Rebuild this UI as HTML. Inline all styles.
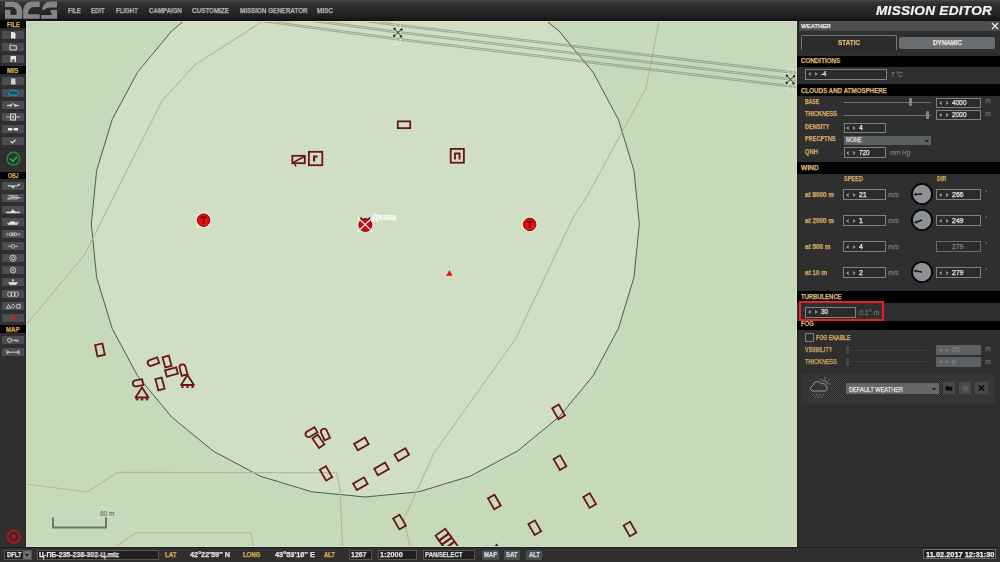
<!DOCTYPE html>
<html><head><meta charset="utf-8">
<style>
*{margin:0;padding:0;box-sizing:border-box}
html,body{width:1000px;height:562px;overflow:hidden;background:#2d2d2d;font-family:"Liberation Sans",sans-serif}
.a{position:absolute}
.t{white-space:nowrap;will-change:transform;-webkit-text-stroke:0.25px currentColor}
#top{left:0;top:0;width:1000px;height:21px;background:linear-gradient(#575757 0,#3e3e3e 2px,#333 6px,#2d2d2d 12px,#222 17px,#131313 21px)}
#top:after{content:"";position:absolute;left:0;top:0;right:0;bottom:0;background-image:linear-gradient(45deg,rgba(0,0,0,.25) 25%,transparent 25%,transparent 75%,rgba(0,0,0,.25) 75%),linear-gradient(45deg,rgba(0,0,0,.25) 25%,transparent 25%,transparent 75%,rgba(0,0,0,.25) 75%);background-size:2px 2px;background-position:0 0,1px 1px}
.menu{top:7px;font-size:7px;font-weight:bold;color:#a8a8a8;letter-spacing:-0.45px;line-height:7px;z-index:2}
#me{left:876px;top:3.5px;font-size:13.6px;font-weight:bold;font-style:italic;color:#f4f4f4;line-height:14px;z-index:2;letter-spacing:0.27px;will-change:transform;-webkit-text-stroke:0.2px #f4f4f4}
#side{left:0;top:21px;width:26px;height:526px;background:#333}
.sh{left:0;width:24px;height:8px;background:#000;color:#e0b050;font-size:7px;font-weight:bold;text-align:center;line-height:8px;letter-spacing:-0.3px}
.sb{left:2px;width:22px;height:8px;background:#4f4f4f;border-radius:1px}
#map{left:26px;top:21px;width:771px;height:526px;background:#c6d9ba;overflow:hidden}
#panel{left:797px;top:21px;width:203px;height:526px;background:#2e2e2e}
#bot{left:0;top:547px;width:1000px;height:15px;background:#2a2a2a}
.hd{left:0;width:203px;background:#000;color:#e8b050;font-size:7px;font-weight:bold;letter-spacing:-0.5px;padding-left:4px}
.lb{color:#d0a258;font-size:7px;letter-spacing:-0.4px;line-height:7px}
.bx{border:1px solid #7a7a7a;background:#2c2c2c;color:#e8e8e8;font-size:7.5px;line-height:9px;padding-left:3px}
.it{color:#8a8a8a;font-style:italic;font-size:7px;line-height:7px}
</style></head><body>
<div id="top" class="a"></div>
<div class="a t" style="left:68px;top:7.77px;font-size:6.5px;line-height:6.5px;font-weight:bold;color:#b0b0b0;font-style:normal;letter-spacing:0px;transform:scaleX(0.905);transform-origin:0 0;z-index:3;">FILE</div>
<div class="a t" style="left:91.25px;top:7.77px;font-size:6.5px;line-height:6.5px;font-weight:bold;color:#b0b0b0;font-style:normal;letter-spacing:0px;transform:scaleX(0.929);transform-origin:0 0;z-index:3;">EDIT</div>
<div class="a t" style="left:115.75px;top:7.77px;font-size:6.5px;line-height:6.5px;font-weight:bold;color:#b0b0b0;font-style:normal;letter-spacing:0px;transform:scaleX(0.933);transform-origin:0 0;z-index:3;">FLIGHT</div>
<div class="a t" style="left:148.6px;top:7.77px;font-size:6.5px;line-height:6.5px;font-weight:bold;color:#b0b0b0;font-style:normal;letter-spacing:0px;transform:scaleX(0.937);transform-origin:0 0;z-index:3;">CAMPAIGN</div>
<div class="a t" style="left:192px;top:7.77px;font-size:6.5px;line-height:6.5px;font-weight:bold;color:#b0b0b0;font-style:normal;letter-spacing:0px;transform:scaleX(0.970);transform-origin:0 0;z-index:3;">CUSTOMIZE</div>
<div class="a t" style="left:239.5px;top:7.77px;font-size:6.5px;line-height:6.5px;font-weight:bold;color:#b0b0b0;font-style:normal;letter-spacing:0px;transform:scaleX(0.962);transform-origin:0 0;z-index:3;">MISSION GENERATOR</div>
<div class="a t" style="left:317px;top:7.77px;font-size:6.5px;line-height:6.5px;font-weight:bold;color:#b0b0b0;font-style:normal;letter-spacing:0px;transform:scaleX(0.985);transform-origin:0 0;z-index:3;">MISC</div>
<div id="me" class="a">MISSION EDITOR</div>

<div class="a" style="left:0px;top:21px;width:26px;height:526px;background:#2f2f2f;"></div>
<div class="a" style="left:25px;top:21px;width:1px;height:526px;background:#222622;"></div>
<div class="a" style="left:0px;top:21px;width:25.7px;height:7px;background:#000;"></div>
<div class="a t" style="left:6.5px;top:21.13px;font-size:7px;line-height:7px;font-weight:bold;color:#e2b055;font-style:normal;letter-spacing:0px;transform:scaleX(0.857);transform-origin:0 0;">FILE</div>
<div class="a" style="left:2px;top:31px;width:22px;height:8px;background:#4b4e51;border-radius:1px;"></div>
<svg class="a" style="left:2px;top:31px" width="22" height="8"><path d="M9,1 h3 l1.5,1.5 v5 h-4.5 Z" fill="#e6e6e6"/></svg>
<div class="a" style="left:2px;top:43px;width:22px;height:8px;background:#4b4e51;border-radius:1px;"></div>
<svg class="a" style="left:2px;top:43px" width="22" height="8"><path d="M8,2 h2 l0.8,0.8 h3.5 v4.2 h-6.3 Z" fill="none" stroke="#e6e6e6" stroke-width="0.9"/></svg>
<div class="a" style="left:2px;top:55px;width:22px;height:8px;background:#4b4e51;border-radius:1px;"></div>
<svg class="a" style="left:2px;top:55px" width="22" height="8"><path d="M8.5,1 h5.5 v6 h-5.5 Z M9.8,4.5 h3 v2.2 h-3 Z" fill="#e6e6e6" fill-rule="evenodd"/></svg>
<div class="a" style="left:0px;top:66px;width:25.7px;height:8px;background:#000;"></div>
<div class="a t" style="left:7.25px;top:66.63px;font-size:7px;line-height:7px;font-weight:bold;color:#e2b055;font-style:normal;letter-spacing:0px;transform:scaleX(0.924);transform-origin:0 0;">MIS</div>
<div class="a" style="left:2px;top:77px;width:22px;height:8px;background:#4b4e51;border-radius:1px;"></div>
<svg class="a" style="left:2px;top:77px" width="22" height="8"><path d="M9,1.5 h4.5 v6 h-4.5 Z" fill="#cfcfcf"/></svg>
<div class="a" style="left:2px;top:89px;width:22px;height:8px;background:#4a4e52;border-radius:1px;"></div>
<svg class="a" style="left:2px;top:89px" width="22" height="8"><path d="M7,6 a2.2,2.2 0 0 1 1.5,-3.2 a2.5,2.5 0 0 1 4.5,-0.5 a2,2 0 0 1 2.2,3.7 Z" fill="#0f4a66" stroke="#2a9cc4" stroke-width="1"/></svg>
<div class="a" style="left:2px;top:101px;width:22px;height:8px;background:#4b4e51;border-radius:1px;"></div>
<svg class="a" style="left:2px;top:101px" width="22" height="8"><path d="M5,4.5 h3 M14,4.5 h3 M8,5 l3,-2.5 l3,2.5" fill="none" stroke="#e6e6e6" stroke-width="0.9"/><circle cx="8.5" cy="4.5" r="1" fill="none" stroke="#e6e6e6" stroke-width="0.7"/><circle cx="13.5" cy="4.5" r="1" fill="none" stroke="#e6e6e6" stroke-width="0.7"/></svg>
<div class="a" style="left:2px;top:113px;width:22px;height:8px;background:#4b4e51;border-radius:1px;"></div>
<svg class="a" style="left:2px;top:113px" width="22" height="8"><path d="M4,4 h14" stroke="#e6e6e6" stroke-width="0.8"/><rect x="8.5" y="1" width="5" height="6" fill="#505050" stroke="#e6e6e6" stroke-width="0.9"/><path d="M10,2.7 l2,2.6 M12,2.7 l-2,2.6" stroke="#e6e6e6" stroke-width="0.8"/></svg>
<div class="a" style="left:2px;top:125px;width:22px;height:8px;background:#4b4e51;border-radius:1px;"></div>
<svg class="a" style="left:2px;top:125px" width="22" height="8"><path d="M6,3 h4 v2.5 h-4 Z M12,3 h4 v2.5 h-4 Z" fill="#e6e6e6"/><path d="M10,4.2 h2" stroke="#e6e6e6" stroke-width="0.7"/></svg>
<div class="a" style="left:2px;top:137px;width:22px;height:8px;background:#4b4e51;border-radius:1px;"></div>
<svg class="a" style="left:2px;top:137px" width="22" height="8"><path d="M8.5,4.2 l1.8,1.8 l3.3,-3.3" fill="none" stroke="#e6e6e6" stroke-width="1.1"/></svg>
<svg class="a" style="left:5px;top:150px" width="18" height="18"><circle cx="8.4" cy="8.7" r="6.4" fill="#263a2b" stroke="#2b8a40" stroke-width="1.4"/><path d="M5,8.4 l2.8,2.9 l4.6,-4.9" fill="none" stroke="#2fa848" stroke-width="1.5"/></svg>
<div class="a" style="left:0px;top:172px;width:25.7px;height:7px;background:#000;"></div>
<div class="a t" style="left:7.65px;top:172.13px;font-size:7px;line-height:7px;font-weight:bold;color:#e2b055;font-style:normal;letter-spacing:0px;transform:scaleX(0.743);transform-origin:0 0;">OBJ</div>
<div class="a" style="left:2px;top:182px;width:22px;height:8px;background:#4b4e51;border-radius:1px;"></div>
<svg class="a" style="left:2px;top:182px" width="22" height="8"><path d="M5,3.8 L7,4.6 H14.5 L17.5,3.2 L18,1.8 L16.5,2 L15,3.6 H7.5 Z M9,4.6 L11.5,6.3 H12.5 L11.5,4.6" fill="#e6e6e6" stroke="none"/><path d="M6,3.2 l1.5,0.7" stroke="#e6e6e6" stroke-width="0.6"/></svg>
<div class="a" style="left:2px;top:194px;width:22px;height:8px;background:#4b4e51;border-radius:1px;"></div>
<svg class="a" style="left:2px;top:194px" width="22" height="8"><path d="M6,1.8 H16 M11,1.8 V3.2 M5.5,5 H15 L16,3.5 H8 Z M15.5,4 H18 L18.5,3" fill="none" stroke="#e6e6e6" stroke-width="0.75"/></svg>
<div class="a" style="left:2px;top:206px;width:22px;height:8px;background:#4b4e51;border-radius:1px;"></div>
<svg class="a" style="left:2px;top:206px" width="22" height="8"><path d="M4,6 H18 L17,6.8 H5 Z M8.5,6 L10,4.5 H12 L13.5,6 M10.5,4.5 V2.8" fill="#e6e6e6" stroke="#e6e6e6" stroke-width="0.6"/></svg>
<div class="a" style="left:2px;top:218px;width:22px;height:8px;background:#4b4e51;border-radius:1px;"></div>
<svg class="a" style="left:2px;top:218px" width="22" height="8"><path d="M5.5,5.2 H16 L15,6.5 H6.5 Z M8,5.2 V3.8 H12.5 V5.2 M12.5,4.2 H17" fill="#e6e6e6" stroke="#e6e6e6" stroke-width="0.6"/></svg>
<div class="a" style="left:2px;top:230px;width:22px;height:8px;background:#4b4e51;border-radius:1px;"></div>
<svg class="a" style="left:2px;top:230px" width="22" height="8"><path d="M4,4.3 L5.2,3 L6.4,4.3 L5.2,5.6 Z M15.6,4.3 L16.8,3 L18,4.3 L16.8,5.6 Z" fill="none" stroke="#e6e6e6" stroke-width="0.6"/><circle cx="8.5" cy="4.3" r="1.5" fill="none" stroke="#e6e6e6" stroke-width="0.7"/><circle cx="11" cy="4.3" r="1.5" fill="none" stroke="#e6e6e6" stroke-width="0.7"/><circle cx="13.5" cy="4.3" r="1.5" fill="none" stroke="#e6e6e6" stroke-width="0.7"/></svg>
<div class="a" style="left:2px;top:242px;width:22px;height:8px;background:#4b4e51;border-radius:1px;"></div>
<svg class="a" style="left:2px;top:242px" width="22" height="8"><path d="M6,4.3 h3 M13,4.3 h3" stroke="#e6e6e6" stroke-width="0.7"/><circle cx="11" cy="4.3" r="1.8" fill="none" stroke="#e6e6e6" stroke-width="0.7"/></svg>
<div class="a" style="left:2px;top:254px;width:22px;height:8px;background:#4b4e51;border-radius:1px;"></div>
<svg class="a" style="left:2px;top:254px" width="22" height="8"><circle cx="11" cy="4.2" r="3.2" fill="none" stroke="#e6e6e6" stroke-width="0.7"/><circle cx="11" cy="4.2" r="1.5" fill="none" stroke="#e6e6e6" stroke-width="0.7"/></svg>
<div class="a" style="left:2px;top:266px;width:22px;height:8px;background:#4b4e51;border-radius:1px;"></div>
<svg class="a" style="left:2px;top:266px" width="22" height="8"><circle cx="11" cy="4.2" r="2.8" fill="none" stroke="#e6e6e6" stroke-width="0.7"/><path d="M9.6,2.8 l2.8,2.8 M12.4,2.8 l-2.8,2.8" stroke="#e6e6e6" stroke-width="0.7"/></svg>
<div class="a" style="left:2px;top:278px;width:22px;height:8px;background:#4b4e51;border-radius:1px;"></div>
<svg class="a" style="left:2px;top:278px" width="22" height="8"><path d="M6.5,4.6 h9 l-1.5,2 h-6 Z M11,4.6 v-2" fill="#e6e6e6" stroke="#e6e6e6" stroke-width="0.6"/><circle cx="11" cy="2.2" r="0.9" fill="#e6e6e6"/></svg>
<div class="a" style="left:2px;top:290px;width:22px;height:8px;background:#4b4e51;border-radius:1px;"></div>
<svg class="a" style="left:2px;top:290px" width="22" height="8"><ellipse cx="7.6" cy="4.2" rx="2" ry="2.4" fill="none" stroke="#e6e6e6" stroke-width="0.7"/><ellipse cx="11" cy="4.2" rx="2" ry="2.4" fill="none" stroke="#e6e6e6" stroke-width="0.7"/><ellipse cx="14.4" cy="4.2" rx="2" ry="2.4" fill="none" stroke="#e6e6e6" stroke-width="0.7"/></svg>
<div class="a" style="left:2px;top:302px;width:22px;height:8px;background:#4b4e51;border-radius:1px;"></div>
<svg class="a" style="left:2px;top:302px" width="22" height="8"><path d="M4.5,6.3 l2,-3.8 l2,3.8 Z M11,2.2 l2,2.1 l-2,2.1 l-2,-2.1 Z M14.8,2.4 h3.4 v3.8 h-3.4 Z" fill="none" stroke="#e6e6e6" stroke-width="0.75"/></svg>
<div class="a" style="left:2px;top:314px;width:22px;height:8px;background:#4b4e51;border-radius:1px;"></div>
<svg class="a" style="left:2px;top:314px" width="22" height="8"><path d="M9.2,2.2 l3.6,3.8 M12.8,2.2 l-3.6,3.8" stroke="#dd1a1a" stroke-width="1.5"/></svg>
<div class="a" style="left:0px;top:325px;width:25.7px;height:8px;background:#000;"></div>
<div class="a t" style="left:6.15px;top:325.63px;font-size:7px;line-height:7px;font-weight:bold;color:#e2b055;font-style:normal;letter-spacing:0px;transform:scaleX(0.881);transform-origin:0 0;">MAP</div>
<div class="a" style="left:2px;top:336px;width:22px;height:8px;background:#4b4e51;border-radius:1px;"></div>
<svg class="a" style="left:2px;top:336px" width="22" height="8"><circle cx="7.5" cy="4.2" r="2" fill="none" stroke="#e6e6e6" stroke-width="0.8"/><path d="M9.5,4.2 h7 M14,4.2 v1.8 M16,4.2 v1.5" stroke="#e6e6e6" stroke-width="0.8"/></svg>
<div class="a" style="left:2px;top:348px;width:22px;height:8px;background:#4b4e51;border-radius:1px;"></div>
<svg class="a" style="left:2px;top:348px" width="22" height="8"><path d="M5,2 v4.5 M17,2 v4.5 M5.5,4.2 h11 M7,3 l-1.2,1.2 l1.2,1.2 M15,3 l1.2,1.2 l-1.2,1.2" stroke="#e6e6e6" stroke-width="0.8" fill="none"/></svg>
<svg class="a" style="left:4px;top:527px" width="20" height="20"><circle cx="9.75" cy="9.8" r="6.2" fill="none" stroke="#a8161e" stroke-width="2.3"/><circle cx="9.75" cy="9.6" r="2.4" fill="#b0161e"/></svg>
<svg class="a" style="left:0;top:0" width="60" height="21"><g fill="#858585"><path d="M5,1.7 H12.5 C18.5,1.7 22.2,6 22.2,12 V18.7 H5 V9.7 H10.4 V14.8 H16.6 V12 C16.6,9 14.5,6.9 12,6.9 H5 Z"/><path d="M23.2,18.7 V11 C23.2,5.5 27,1.5 32.2,1.5 H39.7 V6.9 H34 C30.5,6.9 28.1,10 28.1,14.2 H39.7 V18.7 Z"/><path d="M41.9,9.7 C43,4.5 46.5,1.5 51,1.5 H57 V7.5 H51 C47.5,7.5 45.5,8.3 44.8,9.7 Z"/><path d="M50,10 H57 V18.7 H41.2 V14.9 H52 Z"/></g></svg>
<div id="map" class="a"><svg class="a" style="left:0;top:0" width="771" height="526" viewBox="26 21 771 526"><polygon points="639.3,224.0 634.0,277.3 618.4,328.5 593.1,375.7 559.0,417.0 517.5,451.0 470.2,476.2 418.8,491.8 365.3,497.0 311.8,491.8 260.4,476.2 213.1,451.0 171.6,417.0 137.5,375.7 112.2,328.5 96.6,277.3 91.3,224.0 96.6,170.7 112.2,119.5 137.5,72.3 171.6,31.0 213.1,-3.0 260.4,-28.2 311.8,-43.8 365.3,-49.0 418.8,-43.8 470.2,-28.2 517.5,-3.0 559.0,31.0 593.1,72.3 618.4,119.5 634.0,170.7" fill="#d0dfc4" stroke="#4d5c4b" stroke-width="1"/><polyline points="263,21 194.8,64.9 162,101 84.5,255 26,325" fill="none" stroke="#b9b597" stroke-width="1.1"/><polyline points="659,21 646,88 585.5,199 574,215.5 516,338.2 434,453 404,519 410,547" fill="none" stroke="#b9b597" stroke-width="1.1"/><polyline points="26,484 87.4,492 117.5,472.4 336.5,472.7 340,489 342.5,547" fill="none" stroke="#b9b597" stroke-width="1.1"/><polyline points="115,547 136,532.8 251,532.8 253.6,547" fill="none" stroke="#b9b597" stroke-width="1.1"/><polyline points="200,-2.37 398,24.36 800,72.60" fill="none" stroke="#7c8d76" stroke-width="0.75" opacity="0.9"/><polyline points="200,-0.77 398,25.96 800,74.20" fill="none" stroke="#7c8d76" stroke-width="0.75" opacity="0.9"/><polyline points="200,4.63 398,31.36 800,79.60" fill="none" stroke="#7c8d76" stroke-width="0.75" opacity="0.9"/><polyline points="200,6.23 398,32.96 800,81.20" fill="none" stroke="#7c8d76" stroke-width="0.75" opacity="0.9"/><polyline points="200,11.63 398,38.36 800,86.60" fill="none" stroke="#7c8d76" stroke-width="0.75" opacity="0.9"/><polyline points="200,13.23 398,39.96 800,88.20" fill="none" stroke="#7c8d76" stroke-width="0.75" opacity="0.9"/><rect x="395.5" y="21.6" width="5" height="23" fill="none" stroke="#eef2e6" stroke-width="0.8" opacity="0.6"/><path d="M394.5,28.8 L401.5,36.4 M401.5,29.400000000000002 L394.5,35.800000000000004" stroke="#334433" stroke-width="1"/><circle cx="394.5" cy="28.8" r="1.2" fill="#253525"/><circle cx="401.5" cy="29.400000000000002" r="1.2" fill="#253525"/><circle cx="394.2" cy="35.800000000000004" r="1.2" fill="#253525"/><circle cx="401" cy="36.4" r="1.2" fill="#253525"/><rect x="788.0" y="68.5" width="5" height="23" fill="none" stroke="#eef2e6" stroke-width="0.8" opacity="0.6"/><path d="M787.0,75.7 L794.0,83.3 M794.0,76.3 L787.0,82.7" stroke="#334433" stroke-width="1"/><circle cx="787.0" cy="75.7" r="1.2" fill="#253525"/><circle cx="794.0" cy="76.3" r="1.2" fill="#253525"/><circle cx="786.7" cy="82.7" r="1.2" fill="#253525"/><circle cx="793.5" cy="83.3" r="1.2" fill="#253525"/><rect x="-6.2" y="-3.4" width="12.4" height="6.8" transform="translate(404,124.75) rotate(0)" fill="none" stroke="#6a1616" stroke-width="1.8"/><rect x="-6.7" y="-6.7" width="13.4" height="13.4" transform="translate(315.6,158.5) rotate(0)" fill="none" stroke="#6a1616" stroke-width="1.8"/><path d="M313,161.5 V155.5 H317.5 V157.5 H315.2 V161.5 Z" fill="#6a1616"/><rect x="-6.2" y="-3.7" width="12.5" height="7.4" transform="translate(298.5,159.5) rotate(0)" fill="none" stroke="#6a1616" stroke-width="1.8"/><path d="M292.5,163 L305,156 M294,163 L296,166.5" stroke="#6a1616" stroke-width="1.5" fill="none"/><rect x="-6.6" y="-6.9" width="13.2" height="13.8" transform="translate(457.3,155.8) rotate(0)" fill="none" stroke="#6a1616" stroke-width="1.8"/><path d="M454,159.5 V152.5 H460.5 V159.5 H458.6 V154.4 H455.9 V159.5 Z" fill="#6a1616"/><rect x="-3.8" y="-5.8" width="7.5" height="11.5" transform="translate(100,350) rotate(-12)" fill="none" stroke="#6a1616" stroke-width="1.8"/><path d="M-2.5,-3.0 H5.5 V3.0 H-2.5 A3.0,3.0 0 0 1 -2.5,-3.0 Z" transform="translate(153,362) rotate(-20)" fill="none" stroke="#6a1616" stroke-width="1.8"/><rect x="-3.2" y="-5.2" width="6.5" height="10.5" transform="translate(167,361.5) rotate(-15)" fill="none" stroke="#6a1616" stroke-width="1.8"/><rect x="-5.8" y="-3.2" width="11.5" height="6.5" transform="translate(171.5,372) rotate(-15)" fill="none" stroke="#6a1616" stroke-width="1.8"/><path d="M-2.5,-3.0 H5.5 V3.0 H-2.5 A3.0,3.0 0 0 1 -2.5,-3.0 Z" transform="translate(183.2,369.8) rotate(75)" fill="none" stroke="#6a1616" stroke-width="1.8"/><path d="M187.4,375 L194,385 L181,385 Z" fill="none" stroke="#6a1616" stroke-width="1.8" stroke-linejoin="round"/><path d="M182.5,385 v2.8 M187.5,385 v2.8 M192.5,385 v2.8" stroke="#6a1616" stroke-width="1.5"/><path d="M181,387.3 h2.8 M186.1,387.3 h2.8 M191.2,387.3 h2.8" stroke="#6a1616" stroke-width="1.1"/><path d="M-2.0,-3.0 H5.0 V3.0 H-2.0 A3.0,3.0 0 0 1 -2.0,-3.0 Z" transform="translate(137.8,383) rotate(-10)" fill="none" stroke="#6a1616" stroke-width="1.8"/><path d="M142,387.5 L148.5,397.5 L135.5,397.5 Z" fill="none" stroke="#6a1616" stroke-width="1.8" stroke-linejoin="round"/><path d="M137.0,397.5 v2.8 M142.0,397.5 v2.8 M147.0,397.5 v2.8" stroke="#6a1616" stroke-width="1.5"/><path d="M135.5,399.8 h2.8 M140.6,399.8 h2.8 M145.7,399.8 h2.8" stroke="#6a1616" stroke-width="1.1"/><rect x="-3.2" y="-5.8" width="6.5" height="11.5" transform="translate(160,384) rotate(-15)" fill="none" stroke="#6a1616" stroke-width="1.8"/><path d="M-2.8,-3.0 H5.8 V3.0 H-2.8 A3.0,3.0 0 0 1 -2.8,-3.0 Z" transform="translate(311,432.7) rotate(-30)" fill="none" stroke="#6a1616" stroke-width="1.8"/><rect x="-3.2" y="-5.8" width="6.5" height="11.5" transform="translate(318.4,441.4) rotate(-35)" fill="none" stroke="#6a1616" stroke-width="1.8"/><path d="M-2.5,-3.0 H5.5 V3.0 H-2.5 A3.0,3.0 0 0 1 -2.5,-3.0 Z" transform="translate(325,434) rotate(65)" fill="none" stroke="#6a1616" stroke-width="1.8"/><rect x="-6.2" y="-3.8" width="12.5" height="7.5" transform="translate(361.4,444) rotate(-30)" fill="none" stroke="#6a1616" stroke-width="1.8"/><rect x="-6.2" y="-3.8" width="12.5" height="7.5" transform="translate(401.8,454.7) rotate(-30)" fill="none" stroke="#6a1616" stroke-width="1.8"/><rect x="-6.2" y="-3.8" width="12.5" height="7.5" transform="translate(381.5,469) rotate(-30)" fill="none" stroke="#6a1616" stroke-width="1.8"/><rect x="-6.2" y="-3.8" width="12.5" height="7.5" transform="translate(360.4,483.8) rotate(-30)" fill="none" stroke="#6a1616" stroke-width="1.8"/><rect x="-3.5" y="-6.2" width="7" height="12.5" transform="translate(326,473.4) rotate(-30)" fill="none" stroke="#6a1616" stroke-width="1.8"/><rect x="-3.8" y="-6.2" width="7.5" height="12.5" transform="translate(558.6,411.8) rotate(-30)" fill="none" stroke="#6a1616" stroke-width="1.8"/><rect x="-3.8" y="-6.2" width="7.5" height="12.5" transform="translate(560,462.6) rotate(-30)" fill="none" stroke="#6a1616" stroke-width="1.8"/><rect x="-3.8" y="-6.2" width="7.5" height="12.5" transform="translate(494.4,501.9) rotate(-30)" fill="none" stroke="#6a1616" stroke-width="1.8"/><rect x="-3.8" y="-6.2" width="7.5" height="12.5" transform="translate(589.7,500.5) rotate(-30)" fill="none" stroke="#6a1616" stroke-width="1.8"/><rect x="-3.8" y="-6.2" width="7.5" height="12.5" transform="translate(534.8,527.6) rotate(-30)" fill="none" stroke="#6a1616" stroke-width="1.8"/><rect x="-3.8" y="-6.2" width="7.5" height="12.5" transform="translate(630,529) rotate(-30)" fill="none" stroke="#6a1616" stroke-width="1.8"/><rect x="-3.8" y="-6.2" width="7.5" height="12.5" transform="translate(399.5,522) rotate(-30)" fill="none" stroke="#6a1616" stroke-width="1.8"/><g transform="translate(446.2,540.3) rotate(54.4)"><rect x="-10" y="-6" width="22" height="12" fill="none" stroke="#6a1616" stroke-width="1.8"/><path d="M-4,-6 V6 M1,-6 V6 M6,-6 V6" stroke="#6a1616" stroke-width="2.2"/></g><path d="M494,547 L496.6,543.5 L499,547 Z" fill="#222"/><circle cx="203.6" cy="220.2" r="8.5" fill="#fff3e0" opacity="0.25"/><circle cx="203.6" cy="220.2" r="6.2" fill="#ec0f17" stroke="#7a0508" stroke-width="1"/><path d="M200.6,217.39999999999998 H206.6 M203.6,217.39999999999998 V223.5" stroke="#6a0000" stroke-width="1.6"/><circle cx="529.7" cy="224.4" r="8.5" fill="#fff3e0" opacity="0.25"/><circle cx="529.7" cy="224.4" r="6.2" fill="#ec0f17" stroke="#7a0508" stroke-width="1"/><path d="M526.7,221.6 H532.7 M529.7,221.6 V227.70000000000002" stroke="#6a0000" stroke-width="1.6"/><circle cx="365.4" cy="225" r="6.4" fill="#c90d16" stroke="#5e0006" stroke-width="0.9"/><path d="M360,220.5 L360.8,216.8 L363,219.2 Z M370.8,220.5 L370,216.8 L367.8,219.2 Z" fill="#140404"/><path d="M357,216.8 L373.3,232.4 M373.3,216.8 L357,232.4" stroke="#ffe8e8" stroke-width="1.3" opacity="0.95"/><text x="372" y="220.2" font-family="Liberation Sans" font-size="8.2" fill="#ffffff" stroke="#ffffff" stroke-width="0.25">Джава</text><path d="M449.4,270.2 L452.6,275.8 L446.2,275.8 Z" fill="#e01010"/><path d="M53,517.5 V527.5 H106 V517.5" fill="none" stroke="#6c7b68" stroke-width="2"/><text x="100" y="516" font-family="Liberation Sans" font-size="6.5" fill="#505a50">60 m</text><path d="M26,21.5 H797 M26.5,21 V547 M796.5,21 V547 M26,546.5 H797" stroke="#d2dec8" stroke-width="1"/></svg></div>
<div id="panel" class="a"></div>
<div class="a" style="left:797px;top:21px;width:203.00px;height:526.00px;background:#2f2f2f;"></div>
<div class="a" style="left:797px;top:21px;width:2.00px;height:526.00px;background:#262626;"></div>
<div class="a" style="left:799px;top:21px;width:201.00px;height:9.50px;background:#4a4d4f;"></div>
<div class="a t" style="left:801.3px;top:22.81px;font-size:6.2px;line-height:6.2px;font-weight:bold;color:#e6e6e6;font-style:normal;letter-spacing:0px;transform:scaleX(0.965);transform-origin:0 0;">WEATHER</div>
<svg class="a" style="left:991px;top:22px" width="8" height="8"><path d="M1,1 L7,7 M7,1 L1,7" stroke="#e8e8e8" stroke-width="1.3"/></svg>
<div class="a" style="left:801px;top:34.5px;width:96px;height:15.5px;border:1px solid #767676;border-bottom:none;background:#2b2b2b;border-radius:2px 2px 0 0"></div>
<div class="a t" style="left:838px;top:39.52px;font-size:6.4px;line-height:6.4px;font-weight:bold;color:#dfb977;font-style:normal;letter-spacing:0px;transform:scaleX(0.993);transform-origin:0 0;">STATIC</div>
<div class="a" style="left:899px;top:37px;width:96px;height:12px;background:#6a6d70;border-radius:2px"></div>
<div class="a t" style="left:932.8px;top:39.72px;font-size:6.4px;line-height:6.4px;font-weight:bold;color:#e4e4e4;font-style:normal;letter-spacing:0px;transform:scaleX(0.971);transform-origin:0 0;">DYNAMIC</div>
<div class="a" style="left:797px;top:56px;width:203.00px;height:10.50px;background:#000;"></div>
<div class="a t" style="left:801px;top:57.52px;font-size:6.8px;line-height:6.8px;font-weight:bold;color:#dfb977;font-style:normal;letter-spacing:0px;transform:scaleX(0.916);transform-origin:0 0;">CONDITIONS</div>
<div class="a" style="left:805px;top:69px;width:82.00px;height:10.60px;background:#2b2b2b;border:1px solid #808080;"></div>
<svg class="a" style="left:807.5px;top:72.3px" width="11" height="4"><path d="M2.6,0 L0.2,2 L2.6,4 Z M7.2,0 L9.6,2 L7.2,4 Z" fill="#a0a0a0"/></svg>
<div class="a t" style="left:820.8px;top:70.33px;font-size:7px;line-height:7px;font-weight:normal;color:#ececec;font-style:normal;letter-spacing:0px;transform:scaleX(0.868);transform-origin:0 0;">-4</div>
<div class="a t" style="left:890.6px;top:70.63px;font-size:7px;line-height:7px;font-weight:normal;color:#7e7e7e;font-style:italic;letter-spacing:0px;transform:scaleX(0.817);transform-origin:0 0;">T °C</div>
<div class="a" style="left:797px;top:84px;width:203.00px;height:12.00px;background:#000;"></div>
<div class="a t" style="left:801px;top:87.52px;font-size:6.8px;line-height:6.8px;font-weight:bold;color:#dfb977;font-style:normal;letter-spacing:0px;transform:scaleX(0.913);transform-origin:0 0;">CLOUDS AND ATMOSPHERE</div>
<div class="a t" style="left:805px;top:98.03px;font-size:7px;line-height:7px;font-weight:bold;color:#d3aa62;font-style:normal;letter-spacing:0px;transform:scaleX(0.740);transform-origin:0 0;">BASE</div>
<div class="a" style="left:843.5px;top:101.9px;width:87.00px;height:1.20px;background:#717171;"></div>
<div class="a" style="left:908.5px;top:98.4px;width:3.30px;height:8.00px;background:#858585;border-radius:1px;"></div>
<div class="a" style="left:936px;top:97.7px;width:45.00px;height:10.30px;background:#2b2b2b;border:1px solid #808080;"></div>
<svg class="a" style="left:938.5px;top:100.8px" width="11" height="4"><path d="M2.6,0 L0.2,2 L2.6,4 Z M7.2,0 L9.6,2 L7.2,4 Z" fill="#a0a0a0"/></svg>
<div class="a t" style="left:951.8px;top:98.88px;font-size:7px;line-height:7px;font-weight:normal;color:#ececec;font-style:normal;letter-spacing:0px;transform:scaleX(0.925);transform-origin:0 0;">4000</div>
<div class="a t" style="left:985px;top:97.43px;font-size:7px;line-height:7px;font-weight:normal;color:#6e6e6e;font-style:italic;letter-spacing:0px;">m</div>
<div class="a t" style="left:805px;top:110.33px;font-size:7px;line-height:7px;font-weight:bold;color:#d3aa62;font-style:normal;letter-spacing:0px;transform:scaleX(0.791);transform-origin:0 0;">THICKNESS</div>
<div class="a" style="left:843.5px;top:114.7px;width:87.00px;height:1.20px;background:#717171;"></div>
<div class="a" style="left:925.5px;top:111.2px;width:3.30px;height:8.00px;background:#858585;border-radius:1px;"></div>
<div class="a" style="left:936px;top:110px;width:45.00px;height:10.40px;background:#2b2b2b;border:1px solid #808080;"></div>
<svg class="a" style="left:938.5px;top:113.2px" width="11" height="4"><path d="M2.6,0 L0.2,2 L2.6,4 Z M7.2,0 L9.6,2 L7.2,4 Z" fill="#a0a0a0"/></svg>
<div class="a t" style="left:951.8px;top:111.23px;font-size:7px;line-height:7px;font-weight:normal;color:#ececec;font-style:normal;letter-spacing:0px;transform:scaleX(0.925);transform-origin:0 0;">2000</div>
<div class="a t" style="left:985px;top:109.83px;font-size:7px;line-height:7px;font-weight:normal;color:#6e6e6e;font-style:italic;letter-spacing:0px;">m</div>
<div class="a t" style="left:805px;top:123.13px;font-size:7px;line-height:7px;font-weight:bold;color:#d3aa62;font-style:normal;letter-spacing:0px;transform:scaleX(0.804);transform-origin:0 0;">DENSITY</div>
<div class="a" style="left:843.5px;top:122.5px;width:42.50px;height:10.70px;background:#2b2b2b;border:1px solid #808080;"></div>
<svg class="a" style="left:846.0px;top:125.8px" width="11" height="4"><path d="M2.6,0 L0.2,2 L2.6,4 Z M7.2,0 L9.6,2 L7.2,4 Z" fill="#a0a0a0"/></svg>
<div class="a t" style="left:859.3px;top:123.88px;font-size:7px;line-height:7px;font-weight:normal;color:#ececec;font-style:normal;letter-spacing:0px;">4</div>
<div class="a t" style="left:805px;top:135.13px;font-size:7px;line-height:7px;font-weight:bold;color:#d3aa62;font-style:normal;letter-spacing:0px;transform:scaleX(0.803);transform-origin:0 0;">PRECPTNS</div>
<div class="a" style="left:843.5px;top:136.4px;width:87.50px;height:8.80px;background:#5b6063;"></div>
<div class="a t" style="left:846px;top:137.42px;font-size:6.8px;line-height:6.8px;font-weight:normal;color:#e0e0e0;font-style:normal;letter-spacing:0px;transform:scaleX(0.814);transform-origin:0 0;">NONE</div>
<svg class="a" style="left:925px;top:139.6px" width="5" height="3"><path d="M0,0 H4 L2,2.5 Z" fill="#1a1a1a"/></svg>
<div class="a t" style="left:805px;top:148.13px;font-size:7px;line-height:7px;font-weight:bold;color:#d3aa62;font-style:normal;letter-spacing:0px;transform:scaleX(0.829);transform-origin:0 0;">QNH</div>
<div class="a" style="left:843.5px;top:147.3px;width:42.50px;height:10.70px;background:#2b2b2b;border:1px solid #808080;"></div>
<svg class="a" style="left:846.0px;top:150.7px" width="11" height="4"><path d="M2.6,0 L0.2,2 L2.6,4 Z M7.2,0 L9.6,2 L7.2,4 Z" fill="#a0a0a0"/></svg>
<div class="a t" style="left:859.3px;top:148.68px;font-size:7px;line-height:7px;font-weight:normal;color:#ececec;font-style:normal;letter-spacing:0px;transform:scaleX(0.899);transform-origin:0 0;">720</div>
<div class="a t" style="left:890.4px;top:149.03px;font-size:7px;line-height:7px;font-weight:normal;color:#7a7a7a;font-style:italic;letter-spacing:0px;transform:scaleX(0.887);transform-origin:0 0;">mm Hg</div>
<div class="a" style="left:797px;top:162px;width:203.00px;height:11.50px;background:#000;"></div>
<div class="a t" style="left:801px;top:165.32px;font-size:6.8px;line-height:6.8px;font-weight:bold;color:#dfb977;font-style:normal;letter-spacing:0px;transform:scaleX(0.976);transform-origin:0 0;">WIND</div>
<div class="a t" style="left:844px;top:175.13px;font-size:7px;line-height:7px;font-weight:bold;color:#d3aa62;font-style:normal;letter-spacing:0px;transform:scaleX(0.801);transform-origin:0 0;">SPEED</div>
<div class="a t" style="left:936.7px;top:175.13px;font-size:7px;line-height:7px;font-weight:bold;color:#d3aa62;font-style:normal;letter-spacing:0px;transform:scaleX(0.771);transform-origin:0 0;">DIR</div>
<div class="a t" style="left:805px;top:190.63px;font-size:7px;line-height:7px;font-weight:bold;color:#d3aa62;font-style:normal;letter-spacing:0px;transform:scaleX(0.909);transform-origin:0 0;">at 8000 m</div>
<div class="a" style="left:843.3px;top:189.2px;width:42.40px;height:10.60px;background:#2b2b2b;border:1px solid #808080;"></div>
<svg class="a" style="left:845.8px;top:192.5px" width="11" height="4"><path d="M2.6,0 L0.2,2 L2.6,4 Z M7.2,0 L9.6,2 L7.2,4 Z" fill="#a0a0a0"/></svg>
<div class="a t" style="left:859.0999999999999px;top:190.53px;font-size:7px;line-height:7px;font-weight:normal;color:#ececec;font-style:normal;letter-spacing:0px;transform:scaleX(0.963);transform-origin:0 0;">21</div>
<div class="a t" style="left:887.7px;top:191.03px;font-size:7px;line-height:7px;font-weight:normal;color:#7a7a7a;font-style:italic;letter-spacing:0px;transform:scaleX(0.958);transform-origin:0 0;">m/s</div>
<svg class="a" style="left:910.25px;top:182.20px" width="24" height="24"><circle cx="12" cy="12" r="10.1" fill="#8e9297" stroke="#050505" stroke-width="1.9"/><line x1="12" y1="12" x2="6.41" y2="12.39" stroke="#111" stroke-width="1.4"/><path d="M3.42,12.60 L6.30,10.79 L6.53,13.99 Z" fill="#111"/></svg>
<div class="a" style="left:936px;top:189.2px;width:44.70px;height:10.60px;background:#2b2b2b;border:1px solid #808080;"></div>
<svg class="a" style="left:938.5px;top:192.5px" width="11" height="4"><path d="M2.6,0 L0.2,2 L2.6,4 Z M7.2,0 L9.6,2 L7.2,4 Z" fill="#a0a0a0"/></svg>
<div class="a t" style="left:951.8px;top:190.53px;font-size:7px;line-height:7px;font-weight:normal;color:#ececec;font-style:normal;letter-spacing:0px;transform:scaleX(0.968);transform-origin:0 0;">266</div>
<div class="a t" style="left:985px;top:188.71px;font-size:6px;line-height:6px;font-weight:normal;color:#6a6a6a;font-style:normal;letter-spacing:0px;">°</div>
<div class="a t" style="left:805px;top:216.63px;font-size:7px;line-height:7px;font-weight:bold;color:#d3aa62;font-style:normal;letter-spacing:0px;transform:scaleX(0.909);transform-origin:0 0;">at 2000 m</div>
<div class="a" style="left:843.3px;top:215.2px;width:42.40px;height:10.60px;background:#2b2b2b;border:1px solid #808080;"></div>
<svg class="a" style="left:845.8px;top:218.5px" width="11" height="4"><path d="M2.6,0 L0.2,2 L2.6,4 Z M7.2,0 L9.6,2 L7.2,4 Z" fill="#a0a0a0"/></svg>
<div class="a t" style="left:859.0999999999999px;top:216.53px;font-size:7px;line-height:7px;font-weight:normal;color:#ececec;font-style:normal;letter-spacing:0px;">1</div>
<div class="a t" style="left:887.7px;top:217.03px;font-size:7px;line-height:7px;font-weight:normal;color:#7a7a7a;font-style:italic;letter-spacing:0px;transform:scaleX(0.958);transform-origin:0 0;">m/s</div>
<svg class="a" style="left:910.25px;top:208.20px" width="24" height="24"><circle cx="12" cy="12" r="10.1" fill="#8e9297" stroke="#050505" stroke-width="1.9"/><line x1="12" y1="12" x2="6.77" y2="14.01" stroke="#111" stroke-width="1.4"/><path d="M3.97,15.08 L6.20,12.51 L7.35,15.50 Z" fill="#111"/></svg>
<div class="a" style="left:936px;top:215.2px;width:44.70px;height:10.60px;background:#2b2b2b;border:1px solid #808080;"></div>
<svg class="a" style="left:938.5px;top:218.5px" width="11" height="4"><path d="M2.6,0 L0.2,2 L2.6,4 Z M7.2,0 L9.6,2 L7.2,4 Z" fill="#a0a0a0"/></svg>
<div class="a t" style="left:951.8px;top:216.53px;font-size:7px;line-height:7px;font-weight:normal;color:#ececec;font-style:normal;letter-spacing:0px;transform:scaleX(0.968);transform-origin:0 0;">249</div>
<div class="a t" style="left:985px;top:214.71px;font-size:6px;line-height:6px;font-weight:normal;color:#6a6a6a;font-style:normal;letter-spacing:0px;">°</div>
<div class="a t" style="left:805px;top:242.63px;font-size:7px;line-height:7px;font-weight:bold;color:#d3aa62;font-style:normal;letter-spacing:0px;transform:scaleX(0.910);transform-origin:0 0;">at 500 m</div>
<div class="a" style="left:843.3px;top:241.2px;width:42.40px;height:10.60px;background:#2b2b2b;border:1px solid #808080;"></div>
<svg class="a" style="left:845.8px;top:244.5px" width="11" height="4"><path d="M2.6,0 L0.2,2 L2.6,4 Z M7.2,0 L9.6,2 L7.2,4 Z" fill="#a0a0a0"/></svg>
<div class="a t" style="left:859.0999999999999px;top:242.53px;font-size:7px;line-height:7px;font-weight:normal;color:#ececec;font-style:normal;letter-spacing:0px;">4</div>
<div class="a t" style="left:887.7px;top:243.03px;font-size:7px;line-height:7px;font-weight:normal;color:#7a7a7a;font-style:italic;letter-spacing:0px;transform:scaleX(0.958);transform-origin:0 0;">m/s</div>
<div class="a" style="left:936px;top:241.2px;width:44.70px;height:10.60px;background:#2b2b2b;border:1px solid #6a6a6a;"></div>
<div class="a t" style="left:951.7px;top:242.83px;font-size:7px;line-height:7px;font-weight:normal;color:#858585;font-style:normal;letter-spacing:0px;transform:scaleX(0.968);transform-origin:0 0;">279</div>
<div class="a t" style="left:985px;top:240.71px;font-size:6px;line-height:6px;font-weight:normal;color:#6a6a6a;font-style:normal;letter-spacing:0px;">°</div>
<div class="a t" style="left:805px;top:268.63px;font-size:7px;line-height:7px;font-weight:bold;color:#d3aa62;font-style:normal;letter-spacing:0px;transform:scaleX(0.912);transform-origin:0 0;">at 10 m</div>
<div class="a" style="left:843.3px;top:267.2px;width:42.40px;height:10.60px;background:#2b2b2b;border:1px solid #808080;"></div>
<svg class="a" style="left:845.8px;top:270.5px" width="11" height="4"><path d="M2.6,0 L0.2,2 L2.6,4 Z M7.2,0 L9.6,2 L7.2,4 Z" fill="#a0a0a0"/></svg>
<div class="a t" style="left:859.0999999999999px;top:268.53px;font-size:7px;line-height:7px;font-weight:normal;color:#ececec;font-style:normal;letter-spacing:0px;">2</div>
<div class="a t" style="left:887.7px;top:269.03px;font-size:7px;line-height:7px;font-weight:normal;color:#7a7a7a;font-style:italic;letter-spacing:0px;transform:scaleX(0.958);transform-origin:0 0;">m/s</div>
<svg class="a" style="left:910.25px;top:260.20px" width="24" height="24"><circle cx="12" cy="12" r="10.1" fill="#8e9297" stroke="#050505" stroke-width="1.9"/><line x1="12" y1="12" x2="6.47" y2="11.12" stroke="#111" stroke-width="1.4"/><path d="M3.51,10.65 L6.72,9.54 L6.22,12.70 Z" fill="#111"/></svg>
<div class="a" style="left:936px;top:267.2px;width:44.70px;height:10.60px;background:#2b2b2b;border:1px solid #808080;"></div>
<svg class="a" style="left:938.5px;top:270.5px" width="11" height="4"><path d="M2.6,0 L0.2,2 L2.6,4 Z M7.2,0 L9.6,2 L7.2,4 Z" fill="#a0a0a0"/></svg>
<div class="a t" style="left:951.8px;top:268.53px;font-size:7px;line-height:7px;font-weight:normal;color:#ececec;font-style:normal;letter-spacing:0px;transform:scaleX(0.968);transform-origin:0 0;">279</div>
<div class="a t" style="left:985px;top:266.71px;font-size:6px;line-height:6px;font-weight:normal;color:#6a6a6a;font-style:normal;letter-spacing:0px;">°</div>
<div class="a" style="left:797px;top:291px;width:203.00px;height:12.00px;background:#000;"></div>
<div class="a t" style="left:801px;top:294.32px;font-size:6.8px;line-height:6.8px;font-weight:bold;color:#dfb977;font-style:normal;letter-spacing:0px;transform:scaleX(0.865);transform-origin:0 0;">TURBULENCE</div>
<div class="a" style="left:797px;top:303px;width:203.00px;height:18.00px;background:#2f2f2f;"></div>
<div class="a" style="left:799px;top:301.2px;width:85.3px;height:20.2px;border:2.6px solid #e3222b;background:#2f2f2f"></div>
<div class="a" style="left:805px;top:307px;width:51.20px;height:10.50px;background:#2b2b2b;border:1px solid #808080;"></div>
<svg class="a" style="left:807.5px;top:310.2px" width="11" height="4"><path d="M2.6,0 L0.2,2 L2.6,4 Z M7.2,0 L9.6,2 L7.2,4 Z" fill="#a0a0a0"/></svg>
<div class="a t" style="left:820.8px;top:308.28px;font-size:7px;line-height:7px;font-weight:normal;color:#ececec;font-style:normal;letter-spacing:0px;transform:scaleX(0.899);transform-origin:0 0;">30</div>
<div class="a t" style="left:859.4px;top:309.03px;font-size:7px;line-height:7px;font-weight:normal;color:#6f6f6f;font-style:italic;letter-spacing:0px;transform:scaleX(1.000);transform-origin:0 0;">0.1° m</div>
<div class="a" style="left:797px;top:321.3px;width:203.00px;height:8.70px;background:#000;"></div>
<div class="a t" style="left:801.3px;top:320.92px;font-size:6.8px;line-height:6.8px;font-weight:bold;color:#dfb977;font-style:normal;letter-spacing:0px;transform:scaleX(0.862);transform-origin:0 0;">FOG</div>
<div class="a" style="left:805px;top:333px;width:8.50px;height:8.60px;border:1px solid #7a7a7a;"></div>
<div class="a t" style="left:816px;top:334.23px;font-size:7px;line-height:7px;font-weight:bold;color:#d3aa62;font-style:normal;letter-spacing:0px;transform:scaleX(0.750);transform-origin:0 0;">FOG ENABLE</div>
<div class="a t" style="left:805.1px;top:346.33px;font-size:7px;line-height:7px;font-weight:bold;color:#c29e5e;font-style:normal;letter-spacing:0px;transform:scaleX(0.774);transform-origin:0 0;">VISIBILITY</div>
<div class="a" style="left:845.7px;top:349.5px;width:81.30px;height:1.20px;background:#3c3c3c;"></div>
<div class="a" style="left:845.5px;top:346px;width:3.30px;height:8.00px;background:#474747;border-radius:1px;"></div>
<div class="a" style="left:936px;top:344.5px;width:44.70px;height:10.10px;background:#5c6063;"></div>
<svg class="a" style="left:938.5px;top:347.6px" width="11" height="4"><path d="M2.6,0 L0.2,2 L2.6,4 Z M7.2,0 L9.6,2 L7.2,4 Z" fill="#7c8084"/></svg>
<div class="a t" style="left:952px;top:346.43px;font-size:7px;line-height:7px;font-weight:normal;color:#7c8084;font-style:normal;letter-spacing:0px;transform:scaleX(0.963);transform-origin:0 0;">25</div>
<div class="a t" style="left:985px;top:345.13px;font-size:7px;line-height:7px;font-weight:normal;color:#6e6e6e;font-style:italic;letter-spacing:0px;">m</div>
<div class="a t" style="left:805px;top:357.63px;font-size:7px;line-height:7px;font-weight:bold;color:#c29e5e;font-style:normal;letter-spacing:0px;transform:scaleX(0.791);transform-origin:0 0;">THICKNESS</div>
<div class="a" style="left:845.7px;top:361.0px;width:81.30px;height:1.20px;background:#3c3c3c;"></div>
<div class="a" style="left:845.5px;top:357.5px;width:3.30px;height:8.00px;background:#474747;border-radius:1px;"></div>
<div class="a" style="left:936px;top:357px;width:44.70px;height:10.40px;background:#5c6063;"></div>
<svg class="a" style="left:938.5px;top:360.2px" width="11" height="4"><path d="M2.6,0 L0.2,2 L2.6,4 Z M7.2,0 L9.6,2 L7.2,4 Z" fill="#7c8084"/></svg>
<div class="a t" style="left:952px;top:359.03px;font-size:7px;line-height:7px;font-weight:normal;color:#7c8084;font-style:normal;letter-spacing:0px;">0</div>
<div class="a t" style="left:985px;top:357.63px;font-size:7px;line-height:7px;font-weight:normal;color:#6e6e6e;font-style:italic;letter-spacing:0px;">m</div>
<div class="a" style="left:801px;top:373.5px;width:194px;height:30.5px;background-color:#3f3f3f;background-image:linear-gradient(45deg,rgba(0,0,0,.3) 25%,transparent 25%,transparent 75%,rgba(0,0,0,.3) 75%),linear-gradient(45deg,rgba(0,0,0,.3) 25%,transparent 25%,transparent 75%,rgba(0,0,0,.3) 75%);background-size:2px 2px;background-position:0 0,1px 1px"></div>
<svg class="a" style="left:808px;top:376px" width="24" height="24"><g fill="none" stroke="#a0a0a0" stroke-width="0.9"><path d="M4,15 a3,3 0 0 1 1,-5.5 a4.5,4.5 0 0 1 8.5,-1.5 a3,3 0 0 1 4.5,2 a3,3 0 0 1 -0.5,5 Z"/><path d="M14,5.5 a3,3 0 0 1 5,3" /><path d="M17,1.5 v1.5 M21.5,3.5 l-1,1 M22.5,8 h-1.5 M12.5,3 l1,1"/></g><path d="M6,18 l-0.7,1.5 M9,18 l-0.7,1.5 M12,18 l-0.7,1.5 M15,18 l-0.7,1.5 M7.5,20.5 l-0.7,1.5 M10.5,20.5 l-0.7,1.5 M13.5,20.5 l-0.7,1.5" stroke="#8a8a8a" stroke-width="0.8"/></svg>
<div class="a" style="left:846.3px;top:383px;width:92.40px;height:10.80px;background:#63676a;"></div>
<div class="a t" style="left:848.8px;top:385.93px;font-size:7px;line-height:7px;font-weight:normal;color:#e8e8e8;font-style:normal;letter-spacing:0px;transform:scaleX(0.803);transform-origin:0 0;">DEFAULT WEATHER</div>
<svg class="a" style="left:932px;top:387.5px" width="5" height="3"><path d="M0,0 H4 L2,2.5 Z" fill="#1a1a1a"/></svg>
<div class="a" style="left:942.6px;top:382px;width:12.70px;height:12.00px;background:#46494b;"></div>
<div class="a" style="left:958.8px;top:382px;width:12.70px;height:12.00px;background:#46494b;"></div>
<div class="a" style="left:975px;top:382px;width:12.70px;height:12.00px;background:#46494b;"></div>
<svg class="a" style="left:945px;top:385px" width="8" height="6"><path d="M0.5,1 h2.5 l0.8,0.8 h3.5 v3.7 h-6.8 Z" fill="#0e0e0e"/></svg>
<svg class="a" style="left:961.5px;top:384.5px" width="7" height="7"><rect x="0.5" y="0.5" width="6" height="6" fill="#55595c"/></svg>
<svg class="a" style="left:978px;top:385px" width="7" height="6"><path d="M0.8,0.5 L6.2,5.5 M6.2,0.5 L0.8,5.5" stroke="#0a0a0a" stroke-width="1.6"/></svg>
<div class="a" style="left:0;top:547px;width:1000px;height:15px;background:#2f2f2f;border-top:1px solid #1c1c1c"></div>
<div class="a" style="left:4px;top:549.5px;width:28.00px;height:10.50px;background:#1f1f1f;border:1px solid #555"></div>
<div class="a" style="left:23px;top:550.5px;width:8px;height:8.5px;background:#6e6e6e"></div>
<svg class="a" style="left:25px;top:553.5px" width="5" height="3"><path d="M0,0 H4 L2,2.5 Z" fill="#111"/></svg>
<div class="a t" style="left:6.7px;top:551.03px;font-size:7px;line-height:7px;font-weight:bold;color:#e8e8e8;font-style:normal;letter-spacing:0px;transform:scaleX(0.841);transform-origin:0 0;">DFLT</div>
<div class="a" style="left:37px;top:549.5px;width:121.50px;height:10.50px;background:#1f1f1f;border:1px solid #555"></div>
<div class="a t" style="left:39px;top:551.03px;font-size:7px;line-height:7px;font-weight:bold;color:#e8e8e8;font-style:normal;letter-spacing:0px;transform:scaleX(0.993);transform-origin:0 0;">Ц-ПБ-235-238-302-Ц.miz</div>
<div class="a t" style="left:165px;top:551.03px;font-size:7px;line-height:7px;font-weight:bold;color:#e3ae55;font-style:normal;letter-spacing:0px;transform:scaleX(0.886);transform-origin:0 0;">LAT</div>
<div class="a t" style="left:190px;top:551.03px;font-size:7px;line-height:7px;font-weight:bold;color:#e0e0e0;font-style:normal;letter-spacing:0px;transform:scaleX(1.048);transform-origin:0 0;">42°22'59'' N</div>
<div class="a t" style="left:243px;top:551.03px;font-size:7px;line-height:7px;font-weight:bold;color:#e3ae55;font-style:normal;letter-spacing:0px;transform:scaleX(0.861);transform-origin:0 0;">LONG</div>
<div class="a t" style="left:275px;top:551.03px;font-size:7px;line-height:7px;font-weight:bold;color:#e0e0e0;font-style:normal;letter-spacing:0px;transform:scaleX(1.059);transform-origin:0 0;">43°53'16'' E</div>
<div class="a t" style="left:324px;top:551.03px;font-size:7px;line-height:7px;font-weight:bold;color:#e3ae55;font-style:normal;letter-spacing:0px;transform:scaleX(0.840);transform-origin:0 0;">ALT</div>
<div class="a" style="left:348.5px;top:549.5px;width:23.00px;height:10.50px;background:#1f1f1f;border:1px solid #555"></div>
<div class="a t" style="left:351px;top:551.03px;font-size:7px;line-height:7px;font-weight:bold;color:#e0e0e0;font-style:normal;letter-spacing:0px;transform:scaleX(0.989);transform-origin:0 0;">1267</div>
<div class="a" style="left:378px;top:549.5px;width:38.50px;height:10.50px;background:#1f1f1f;border:1px solid #555"></div>
<div class="a t" style="left:379.6px;top:551.03px;font-size:7px;line-height:7px;font-weight:bold;color:#e0e0e0;font-style:normal;letter-spacing:0px;transform:scaleX(1.041);transform-origin:0 0;">1:2000</div>
<div class="a" style="left:423px;top:549.5px;width:51.50px;height:10.50px;background:#1f1f1f;border:1px solid #555"></div>
<div class="a t" style="left:424.7px;top:551.03px;font-size:7px;line-height:7px;font-weight:bold;color:#e0e0e0;font-style:normal;letter-spacing:0px;transform:scaleX(0.854);transform-origin:0 0;">PAN/SELECT</div>
<div class="a" style="left:482px;top:549.5px;width:16.5px;height:10.5px;background:#4a4d50;border-radius:1px"></div>
<div class="a t" style="left:483.75px;top:551.03px;font-size:7px;line-height:7px;font-weight:bold;color:#dedede;font-style:normal;letter-spacing:0px;transform:scaleX(0.836);transform-origin:0 0;">MAP</div>
<div class="a" style="left:504px;top:549.5px;width:16px;height:10.5px;background:#4a4d50;border-radius:1px"></div>
<div class="a t" style="left:506.25px;top:551.03px;font-size:7px;line-height:7px;font-weight:bold;color:#dedede;font-style:normal;letter-spacing:0px;transform:scaleX(0.853);transform-origin:0 0;">SAT</div>
<div class="a" style="left:526px;top:549.5px;width:16px;height:10.5px;background:#4a4d50;border-radius:1px"></div>
<div class="a t" style="left:528.5px;top:551.03px;font-size:7px;line-height:7px;font-weight:bold;color:#dedede;font-style:normal;letter-spacing:0px;transform:scaleX(0.840);transform-origin:0 0;">ALT</div>
<div class="a" style="left:923.3px;top:549.2px;width:72.50px;height:10.30px;background:#1f1f1f;border:1px solid #6a6a6a"></div>
<div class="a t" style="left:925.5px;top:551.13px;font-size:7.2px;line-height:7.2px;font-weight:bold;color:#f0f0f0;font-style:normal;letter-spacing:0px;transform:scaleX(1.031);transform-origin:0 0;">11.02.2017 12:31:30</div>
</body></html>
